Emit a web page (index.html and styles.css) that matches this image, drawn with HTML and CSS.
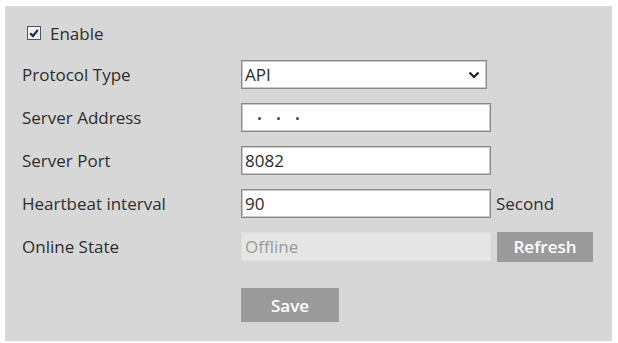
FILE: index.html
```html
<!doctype html>
<html lang="en">
<head>
    <meta charset="UTF-8" />
    <title>Platform Access</title>
    <link rel="stylesheet" href="styles.css">
</head>
<body>
    <div class="panel">
        <div class="enable">
            <span class="check">
                <svg width="14" height="14" viewBox="0 0 14 14">
                    <rect x="0.5" y="0.5" width="13" height="13" fill="#eef4f8" stroke="#4a535e" />
                    <path d="M3.2 7.2 L6 10 L10.8 3.8" fill="none" stroke="#1f2b44" stroke-width="2.2" />
                </svg>
            </span>
            <span>Enable</span>
        </div>
        <div class="form">
            <label>Protocol Type</label>
            <div class="select">
                <span>API</span>
                <svg class="arrow" width="12" height="8" viewBox="0 0 12 8">
                    <path d="M1.5 1.5 L6 6 L10.5 1.5" fill="none" stroke="#222" stroke-width="2.2" />
                </svg>
            </div>
            <span></span>

            <label>Server Address</label>
            <div class="input dots"><i></i><i></i><i></i></div>
            <span></span>

            <label>Server Port</label>
            <div class="input">8082</div>
            <span></span>

            <label>Heartbeat interval</label>
            <div class="input">90</div>
            <span class="unit">Second</span>

            <label>Online State</label>
            <div class="input off">Offline</div>
            <a class="btn refresh">Refresh</a>

            <span></span>
            <a class="btn save">Save</a>
            <span></span>
        </div>
    </div>
</body>
</html>
```

FILE: styles.css
```css
* {
    padding: 0px;
    margin: 0px;
    box-sizing: border-box;
}

html,
body {
    width: 100%;
    height: 100%;
    background: #ffffff;
    font-family: "Open Sans", "Liberation Sans", sans-serif;
    font-size: 17px;
    color: #2e2e2e;
}

.panel {
    margin: 6px 6px 0px 5px;
    height: 335px;
    background: #d7d7d7;
    padding: 20px 0px 0px 17px;
}

.enable {
    display: flex;
    align-items: center;
    height: 14px;
    padding-left: 5px;
    gap: 9px;
}

.check {
    display: flex;
}

.form {
    display: grid;
    grid-template-columns: 219px 250px 104px;
    grid-auto-rows: 29px;
    row-gap: 14px;
    margin-top: 20px;
    align-items: center;
}

.form label {
    line-height: 29px;
}

.select,
.input {
    height: 29px;
    background: #ffffff;
    border: 1px solid #8a8a8a;
    box-shadow: inset 0px 0px 0px 1px #c9c9c9;
    padding: 0px 6px 0px 3px;
    display: flex;
    align-items: center;
    font-size: 17px;
    color: #2a2a2a;
}

.select {
    width: 246px;
    justify-content: space-between;
}

.dots {
    padding-left: 16px;
    gap: 16px;
}

.dots i {
    width: 3px;
    height: 3px;
    border-radius: 50%;
    background: #444444;
    margin-top: 2px;
}

.input.off {
    background: #e6e6e6;
    border-color: #dedede;
    box-shadow: none;
    color: #9a9a9a;
}

.unit {
    padding-left: 5px;
}

.btn {
    display: flex;
    align-items: center;
    justify-content: center;
    background: #9b9b9b;
    color: #ffffff;
    font-weight: 600;
    font-size: 17px;
}

.refresh {
    width: 96px;
    height: 30px;
    margin-left: 6px;
}

.save {
    width: 98px;
    height: 34px;
    margin-top: 31px;
}
```
